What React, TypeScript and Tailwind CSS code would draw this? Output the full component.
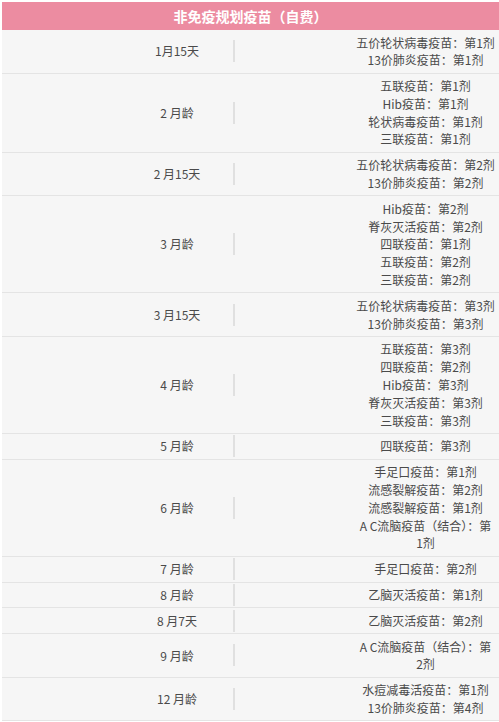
const rows: { age: string; items: string[] }[] = [
  { age: "1月15天", items: ["五价轮状病毒疫苗：第1剂", "13价肺炎疫苗：第1剂"] },
  { age: "2 月龄", items: ["五联疫苗：第1剂", "Hib疫苗：第1剂", "轮状病毒疫苗：第1剂", "三联疫苗：第1剂"] },
  { age: "2 月15天", items: ["五价轮状病毒疫苗：第2剂", "13价肺炎疫苗：第2剂"] },
  {
    age: "3 月龄",
    items: ["Hib疫苗：第2剂", "脊灰灭活疫苗：第2剂", "四联疫苗：第1剂", "五联疫苗：第2剂", "三联疫苗：第2剂"],
  },
  { age: "3 月15天", items: ["五价轮状病毒疫苗：第3剂", "13价肺炎疫苗：第3剂"] },
  {
    age: "4 月龄",
    items: ["五联疫苗：第3剂", "四联疫苗：第2剂", "Hib疫苗：第3剂", "脊灰灭活疫苗：第3剂", "三联疫苗：第3剂"],
  },
  { age: "5 月龄", items: ["四联疫苗：第3剂"] },
  {
    age: "6 月龄",
    items: ["手足口疫苗：第1剂", "流感裂解疫苗：第2剂", "流感裂解疫苗：第1剂", "A C流脑疫苗（结合）：第", "1剂"],
  },
  { age: "7 月龄", items: ["手足口疫苗：第2剂"] },
  { age: "8 月龄", items: ["乙脑灭活疫苗：第1剂"] },
  { age: "8 月7天", items: ["乙脑灭活疫苗：第2剂"] },
  { age: "9 月龄", items: ["A C流脑疫苗（结合）：第", "2剂"] },
  { age: "12 月龄", items: ["水痘减毒活疫苗：第1剂", "13价肺炎疫苗：第4剂"] },
];

export default function App() {
  return (
    <div
      className="w-[499px] bg-white pt-[2px] pl-[2px] text-[12px] text-[#4a4a4a]"
      style={{ fontFamily: '"Noto Sans CJK SC", "Noto Sans", sans-serif' }}
    >
      <div className="flex h-[28px] items-center justify-center bg-[#ec8ca1] text-[14px] font-bold text-white">
        非免疫规划疫苗（自费）
      </div>
      {rows.map((row) => (
        <div key={row.age} className="flex border-b border-[#e4e4e4] bg-[#f6f6f6]">
          <div className="relative flex w-[350px] items-center justify-center leading-[17.8px]">
            <span>{row.age}</span>
            <div className="absolute left-[231px] top-1/2 h-[22px] w-[2px] -translate-y-1/2 bg-[#e0e0e0]" />
          </div>
          <div className="flex w-[147px] flex-col items-center px-[3px] py-[3.5px] text-center leading-[17.8px]">
            {row.items.map((item, i) => (
              <div key={i} className="whitespace-nowrap">{item}</div>
            ))}
          </div>
        </div>
      ))}
    </div>
  );
}
